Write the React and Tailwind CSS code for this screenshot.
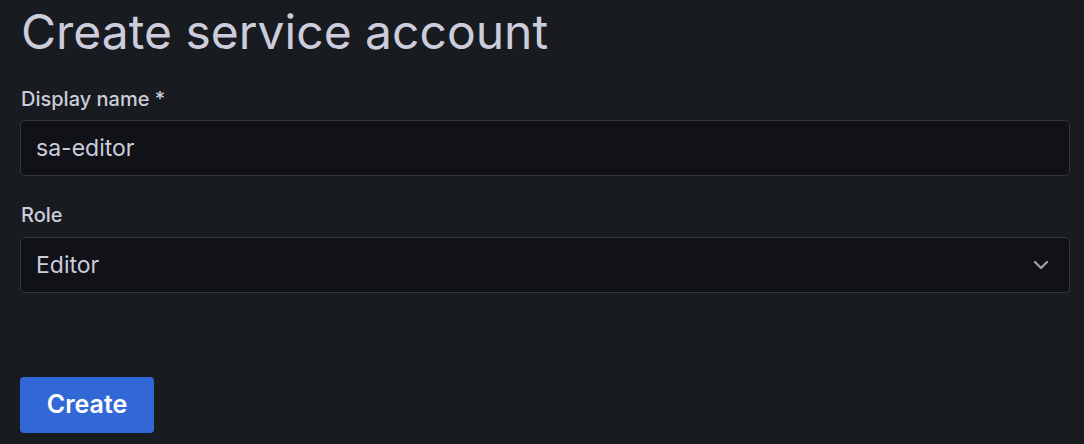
import React from "react";
import { ChevronDown } from "lucide-react";

const App = () => {
    return (
        <div
            className="w-[1084px] h-[444px] bg-[#181b1f] text-[#ccccdc] px-5 pt-[3px] overflow-hidden"
            style={{ fontFamily: "Inter, 'Noto Sans', sans-serif" }}
        >
            <h1 className="text-[48px] leading-[58px] font-normal text-[#ccccdc] pl-px">
                Create service account
            </h1>

            <div className="mt-[24px] mr-[-6px]">
                {/* Display name */}
                <label className="block text-[20px] leading-[28px] font-medium pl-px">
                    Display name *
                </label>
                <div className="mt-[7px] h-[56px] flex items-center bg-[#111217] border border-[#34363b] rounded-[5px] px-[15px]">
                    <span className="text-[23px]">sa-editor</span>
                </div>

                {/* Role */}
                <label className="block mt-[25px] text-[20px] leading-[28px] font-medium pl-px">
                    Role
                </label>
                <div className="mt-[8px] h-[56px] flex items-center justify-between bg-[#111217] border border-[#34363b] rounded-[5px] pl-[15px] pr-[16px]">
                    <span className="text-[23px]">Editor</span>
                    <ChevronDown className="w-6 h-6 text-[#9fa0ab]" strokeWidth={2.2} />
                </div>
            </div>

            <button className="mt-[84px] h-[56px] w-[134px] rounded-[4px] bg-[#3268d6] text-white text-[25px] font-semibold">
                Create
            </button>
        </div>
    );
};

export default App;
